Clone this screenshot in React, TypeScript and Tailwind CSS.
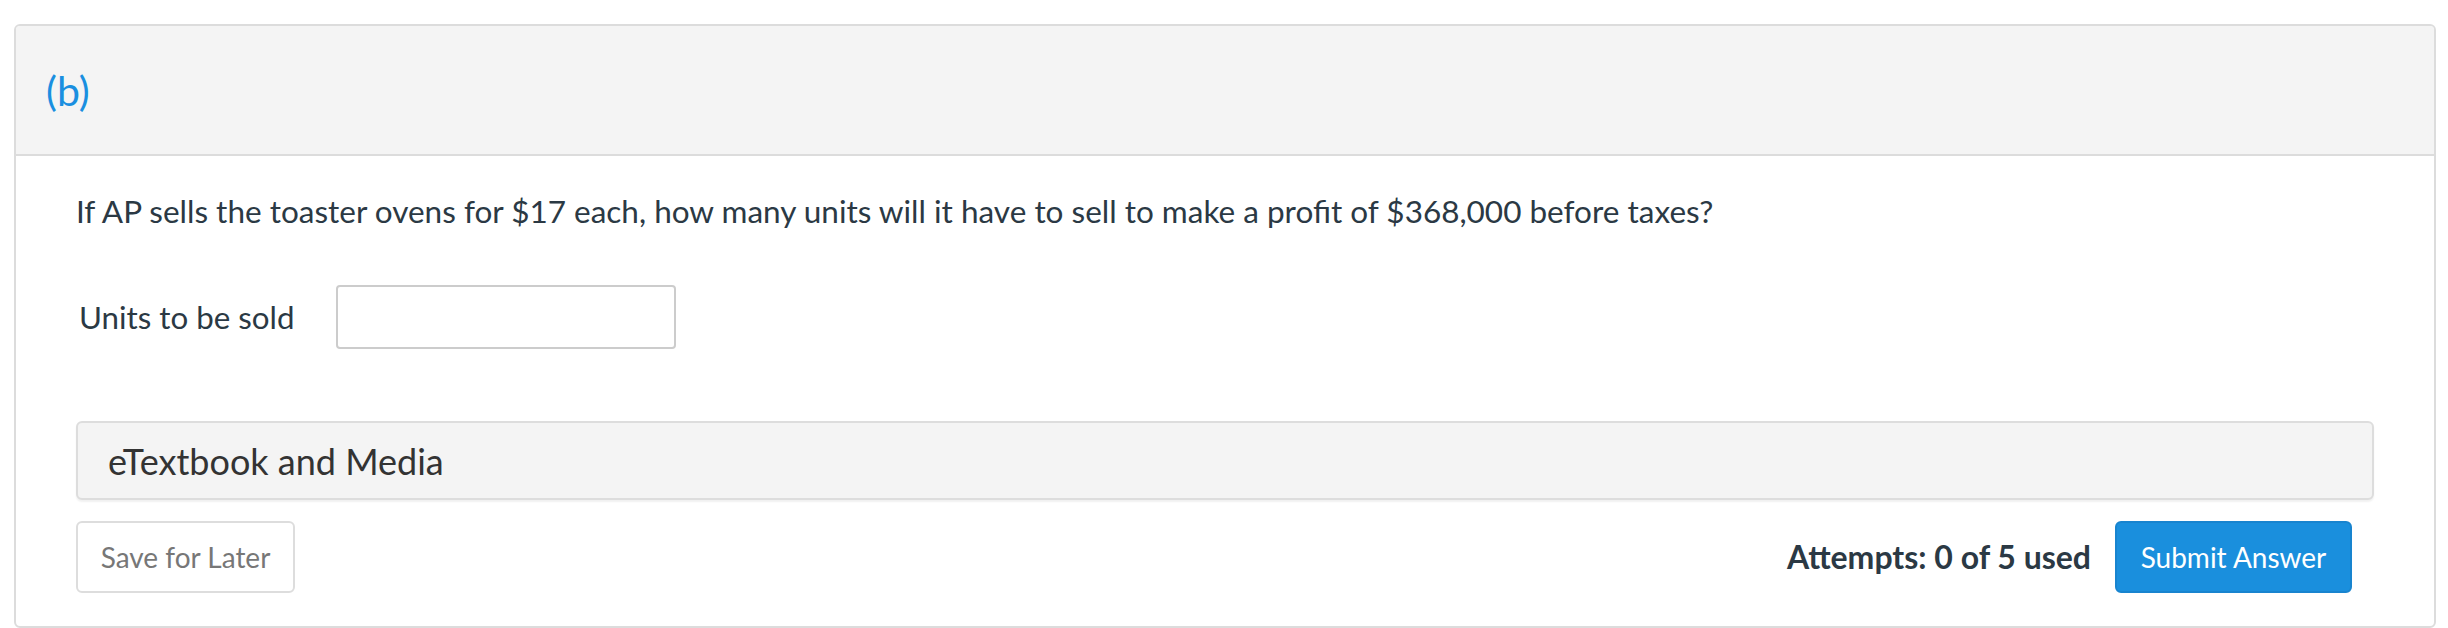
import React from "react";

export default function App() {
  return (
    <div className="w-[2448px] h-[628px] bg-white pt-[24px] pl-[14px]" style={{ fontFamily: "Lato, 'Noto Sans', sans-serif" }}>
      <div className="w-[2422px] h-[604px] border-2 border-[#dcdcdc] rounded-[6px] overflow-hidden flex flex-col">
        {/* Header */}
        <div className="h-[130px] shrink-0 bg-[#f4f4f4] border-b-2 border-[#dcdcdc] flex items-center pl-[30px]">
          <span className="text-[41px] leading-none text-[#1a8fe0]">(b)</span>
        </div>

        {/* Body */}
        <div className="flex flex-col pl-[60px] pr-[60px] pt-[35px]">
          <p className="text-[31.5px] leading-[40px] text-[#2b3944]">
            If AP sells the toaster ovens for $17 each, how many units will it have to sell to make a profit of $368,000 before taxes?
          </p>

          <div className="flex items-center mt-[54px] gap-[42px]">
            <label className="text-[31.3px] leading-[40px] text-[#2b3944] pl-[3px]">Units to be sold</label>
            <input
              type="text"
              className="w-[340px] h-[64px] border-2 border-[#cccccc] rounded-[4px] bg-white outline-none"
            />
          </div>

          <div className="mt-[72px] h-[79px] border-2 border-[#dddddd] rounded-[6px] bg-[#f4f4f4] shadow-[0_2px_2px_rgba(0,0,0,0.06)] flex items-center pl-[30px]">
            <span className="text-[36px] leading-none text-[#333333]">eTextbook and Media</span>
          </div>

          <div className="mt-[21px] flex items-center justify-between pr-[22px]">
            <button className="w-[219px] h-[72px] border-2 border-[#dddddd] rounded-[6px] bg-white text-[28px] text-[#777777]">
              Save for Later
            </button>
            <div className="flex items-center gap-[24px]">
              <span className="text-[32px] font-bold text-[#2b3944]">Attempts: 0 of 5 used</span>
              <button className="w-[237px] h-[72px] rounded-[6px] bg-[#1a8fdd] border-2 border-[#1884cf] text-[28px] text-white">
                Submit Answer
              </button>
            </div>
          </div>
        </div>
      </div>
    </div>
  );
}
